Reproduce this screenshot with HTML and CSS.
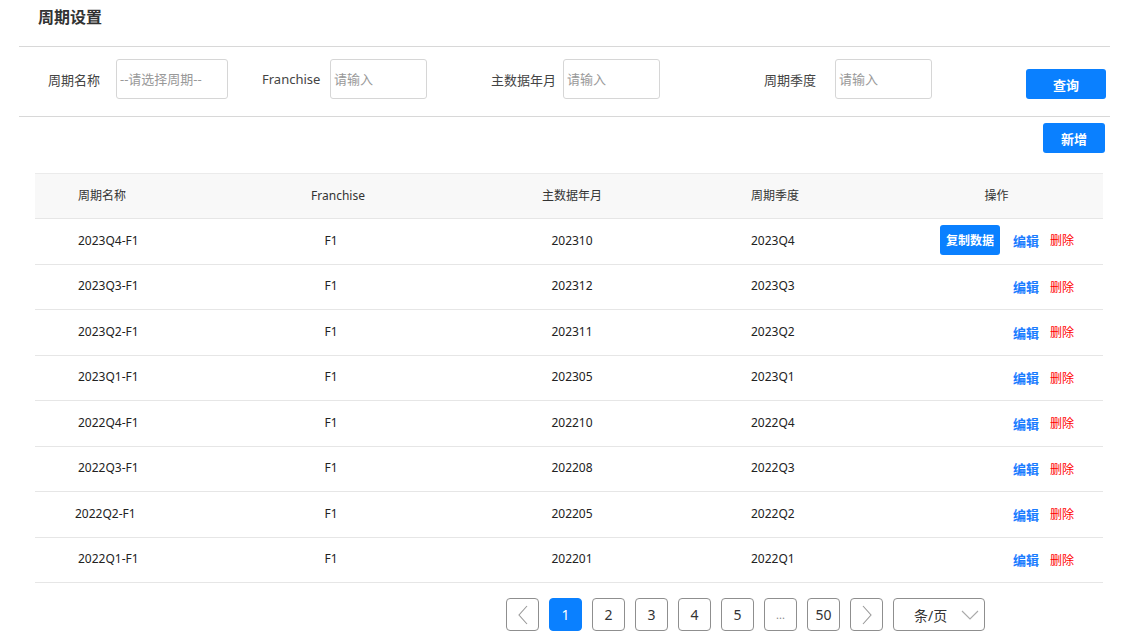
FILE: index.html
```html
<!DOCTYPE html>
<html lang="zh-CN">
<head>
<meta charset="utf-8">
<title>周期设置</title>
<link rel="stylesheet" href="styles.css">
</head>
<body>
<div class="page">
  <div class="title">周期设置</div>
  <div class="filters">
    <div class="field f1"><span class="label">周期名称</span><div class="input w112">--请选择周期--</div></div>
    <div class="field f2"><span class="label">Franchise</span><div class="input">请输入</div></div>
    <div class="field f3"><span class="label">主数据年月</span><div class="input">请输入</div></div>
    <div class="field f4"><span class="label">周期季度</span><div class="input">请输入</div></div>
    <button class="btn btn-query">查询</button>
  </div>
  <div class="toolbar"><button class="btn btn-add">新增</button></div>
  <div class="table">
    <div class="row head">
      <div class="c1">周期名称</div><div class="c2">Franchise</div><div class="c3">主数据年月</div><div class="c4">周期季度</div><div class="c5 op-head">操作</div>
    </div>
    <div class="row">
      <div class="c1">2023Q4-F1</div><div class="c2">F1</div><div class="c3">202310</div><div class="c4">2023Q4</div>
      <div class="c5 ops"><button class="btn btn-copy">复制数据</button><span class="edit">编辑</span><span class="del">删除</span></div>
    </div>
    <div class="row">
      <div class="c1">2023Q3-F1</div><div class="c2">F1</div><div class="c3">202312</div><div class="c4">2023Q3</div>
      <div class="c5 ops low"><span class="edit">编辑</span><span class="del">删除</span></div>
    </div>
    <div class="row">
      <div class="c1">2023Q2-F1</div><div class="c2">F1</div><div class="c3">202311</div><div class="c4">2023Q2</div>
      <div class="c5 ops low"><span class="edit">编辑</span><span class="del">删除</span></div>
    </div>
    <div class="row">
      <div class="c1">2023Q1-F1</div><div class="c2">F1</div><div class="c3">202305</div><div class="c4">2023Q1</div>
      <div class="c5 ops low"><span class="edit">编辑</span><span class="del">删除</span></div>
    </div>
    <div class="row">
      <div class="c1">2022Q4-F1</div><div class="c2">F1</div><div class="c3">202210</div><div class="c4">2022Q4</div>
      <div class="c5 ops low"><span class="edit">编辑</span><span class="del">删除</span></div>
    </div>
    <div class="row">
      <div class="c1">2022Q3-F1</div><div class="c2">F1</div><div class="c3">202208</div><div class="c4">2022Q3</div>
      <div class="c5 ops low"><span class="edit">编辑</span><span class="del">删除</span></div>
    </div>
    <div class="row">
      <div class="c1 shift">2022Q2-F1</div><div class="c2">F1</div><div class="c3">202205</div><div class="c4">2022Q2</div>
      <div class="c5 ops low"><span class="edit">编辑</span><span class="del">删除</span></div>
    </div>
    <div class="row">
      <div class="c1">2022Q1-F1</div><div class="c2">F1</div><div class="c3">202201</div><div class="c4">2022Q1</div>
      <div class="c5 ops low"><span class="edit">编辑</span><span class="del">删除</span></div>
    </div>
  </div>
  <div class="pager">
    <span class="pg"><svg width="12" height="20" viewBox="0 0 12 20"><path d="M10 1 L2 10 L10 19" fill="none" stroke="#999" stroke-width="1.1"/></svg></span>
    <span class="pg active">1</span>
    <span class="pg">2</span>
    <span class="pg">3</span>
    <span class="pg">4</span>
    <span class="pg">5</span>
    <span class="pg dots">...</span>
    <span class="pg">50</span>
    <span class="pg"><svg width="12" height="20" viewBox="0 0 12 20"><path d="M2 1 L10 10 L2 19" fill="none" stroke="#999" stroke-width="1.1"/></svg></span>
    <span class="size">条/页<svg width="18" height="10" viewBox="0 0 18 10"><path d="M1 1 L9 9 L17 1" fill="none" stroke="#aaa" stroke-width="1.1"/></svg></span>
  </div>
</div>
</body>
</html>
```

FILE: styles.css
```css
* { box-sizing: border-box; }
body {
  margin: 0;
  background: #fff;
  font-family: "Noto Sans", "Noto Sans CJK SC", sans-serif;
  color: #333;
}
.page {
  width: 1136px;
  padding: 0 26px 0 19px;
}
.title {
  height: 47px;
  padding: 6px 0 0 19px;
  font-size: 16px;
  font-weight: bold;
  color: #333;
  line-height: 22px;
  border-bottom: 1px solid #d8d8d8;
}
.filters {
  height: 70px;
  border-bottom: 1px solid #d8d8d8;
  display: flex;
  align-items: flex-start;
  padding-top: 12px;
}
.field {
  display: flex;
  align-items: center;
  height: 40px;
}
.label {
  font-size: 13px;
  color: #444;
  white-space: nowrap;
}
.input {
  width: 97px;
  height: 40px;
  border: 1px solid #d6d6d6;
  border-radius: 3px;
  font-size: 13px;
  color: #999;
  line-height: 38px;
  padding-left: 3px;
  white-space: nowrap;
}
.input.w112 { width: 112px; }
.f1 { margin-left: 29px; }
.f1 .label { width: 68px; }
.f2 { margin-left: 34px; }
.f2 .label { width: 68px; }
.f3 { margin-left: 64px; }
.f3 .label { width: 72px; }
.f4 { margin-left: 104px; }
.f4 .label { width: 71px; }
.btn {
  border: none;
  background: #0a80ff;
  color: #fff;
  font-family: inherit;
  font-weight: bold;
  font-size: 13px;
  border-radius: 3px;
  padding: 0;
  cursor: pointer;
}
.btn-query {
  width: 80px;
  height: 30px;
  margin-left: 94px;
  margin-top: 10px;
}
.toolbar {
  display: flex;
  justify-content: flex-end;
  padding: 6px 5px 0 0;
  height: 56px;
}
.btn-add {
  width: 62px;
  height: 30px;
}
.table {
  margin: 0 7px 0 16px;
  border-top: 1px solid #ebebeb;
  font-size: 12px;
  color: #222;
}
.row {
  display: grid;
  grid-template-columns: 185px 230px 244px 206px 203px;
  height: 45.5px;
  align-items: center;
  border-bottom: 1px solid #e6e6e6;
}
.row.head {
  height: 45px;
  background: #f8f8f8;
  color: #333;
}
.row > div { padding-bottom: 2px; }
.c1 { padding-left: 43px; }
.c1.shift { padding-left: 40px; }
.c2, .c3 { text-align: center; }
.c2 { padding-right: 8px; }
.head .c2 { padding-right: 0; padding-left: 6px; }
.c4 { padding-left: 57px; }
.op-head { text-align: center; padding-right: 10px; }
.ops {
  display: flex;
  justify-content: flex-end;
  align-items: center;
  padding-right: 29px;
  font-size: 13px;
}
.ops.low { padding-top: 2px; }
.btn-copy {
  width: 60px;
  height: 30px;
  font-size: 12px;
  margin-right: 13px;
}
.edit {
  color: #1a7cff;
  font-weight: bold;
  margin-right: 11px;
}
.del {
  color: #ff0000;
  font-size: 12px;
}
.pager {
  display: flex;
  gap: 10px;
  padding: 15px 0 0 487px;
}
.pg {
  width: 33px;
  height: 33px;
  border: 1px solid #8f8f8f;
  border-radius: 4px;
  display: flex;
  align-items: center;
  justify-content: center;
  font-size: 14px;
  color: #333;
}
.pg.active {
  background: #0a80ff;
  border-color: #0a80ff;
  color: #fff;
}
.pg.dots { color: #888; font-size: 11px; }
.size {
  width: 92px;
  height: 33px;
  border: 1px solid #8f8f8f;
  border-radius: 4px;
  display: flex;
  align-items: center;
  padding-left: 20px;
  gap: 14px;
  font-size: 14px;
  color: #333;
}
```
